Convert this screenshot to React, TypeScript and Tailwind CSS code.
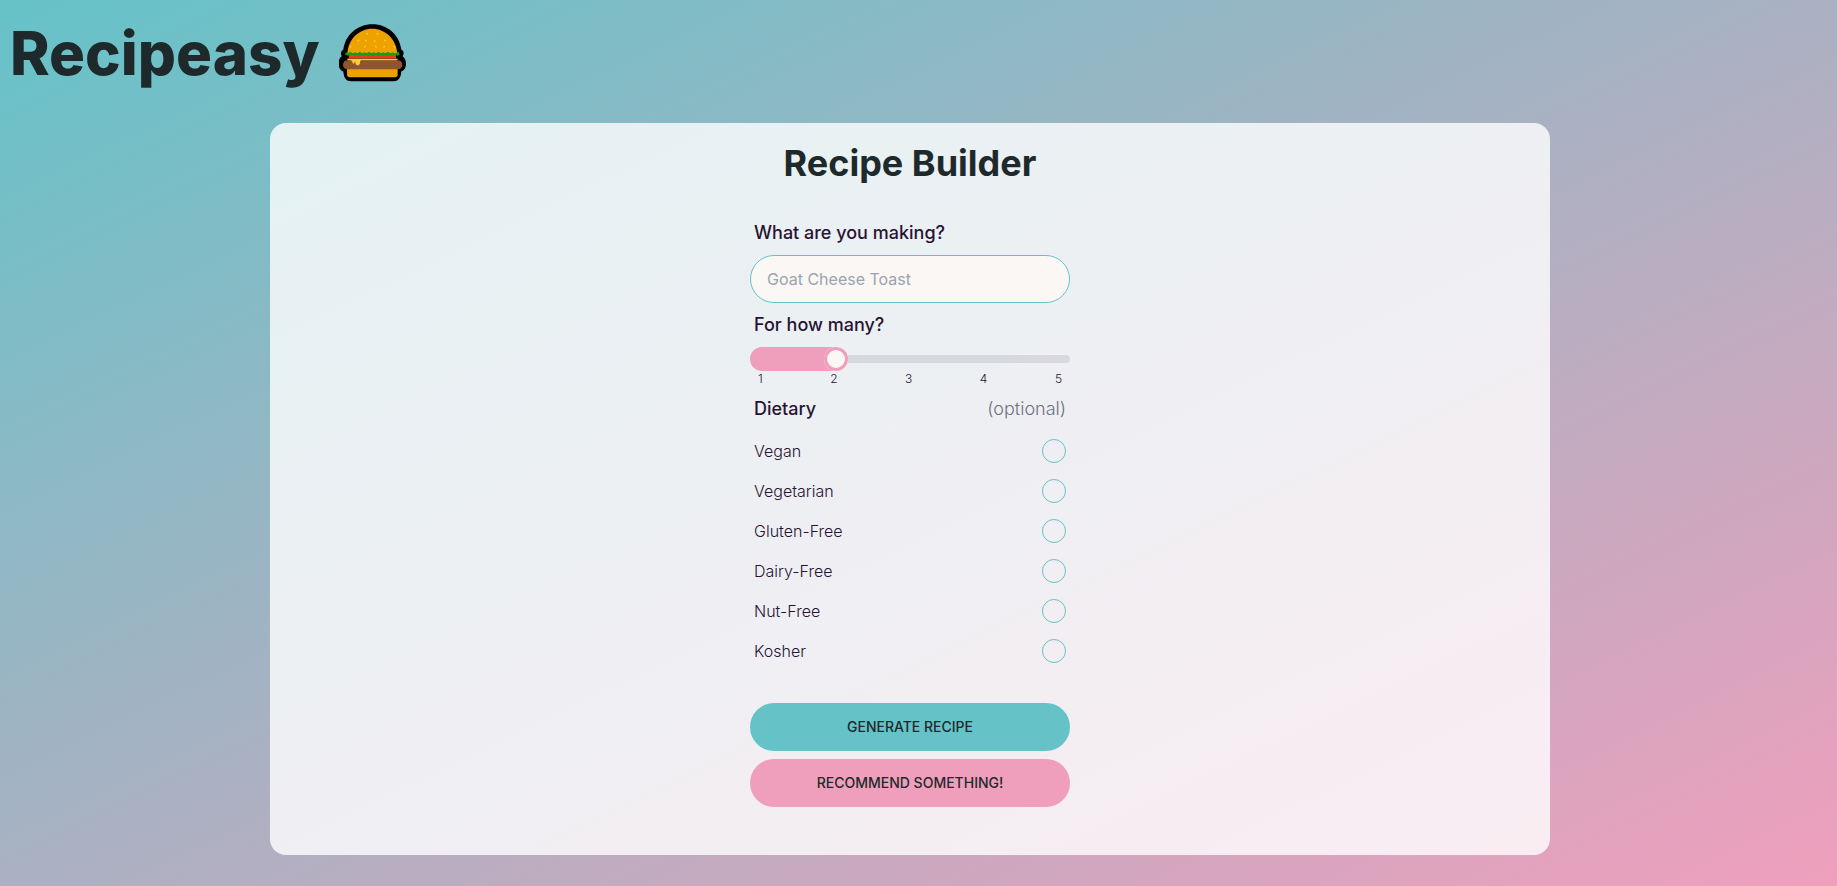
import { useState } from "react";

const DIETS = ["Vegan", "Vegetarian", "Gluten-Free", "Dairy-Free", "Nut-Free", "Kosher"];
const SERVINGS = [1, 2, 3, 4, 5];

function Burger() {
  return (
    <svg viewBox="57 43 200 171" className="h-[58px] w-[67px]" role="img" aria-label="Hamburger">
      <path
        d="M157 43C111 43 76 75 70 118C63 122 61 130 65 138C58 143 56 151 56 162C56 173 62 181 70 184C71 204 79 213 93 213H219C234 213 242 204 243 184C251 181 257 173 257 162C257 151 254 143 247 138C252 130 251 122 243 118C237 75 203 43 157 43Z"
        fill="#000"
      />
      <path d="M82 130C84 88 116 56 156 56S228 88 231 130Z" fill="#eda200" />
      <path d="M81 176H232V193C232 198 229 201 224 201H89C84 201 81 198 81 193Z" fill="#eda200" />
      <rect x="86" y="132" width="141" height="13" fill="#f03a17" />
      <path d="M80 146H234L228 152H86Z" fill="#ffc83d" />
      <rect x="69" y="150" width="177" height="27" rx="13" fill="#8e562e" />
      <path
        d="M91 149H124L120 153V158C118 168 106 166 106 158V154H104V156C104 161 97 161 97 156V154Z"
        fill="#ffc83d"
      />
      <path
        d="M77 126L84 129L91 125L98 129L105 126L112 129L119 125L126 129L133 126L140 129L147 125L154 129L161 126L168 129L175 125L182 129L189 126L196 129L203 125L210 129L217 126L224 129L235 125L238 134L231 137L224 133L217 138L210 134L203 138L196 134L188 139L181 134L174 138L167 134L160 138L153 134L146 138L139 134L132 139L125 134L118 139L110 134L103 138L96 134L89 137L75 134Z"
        fill="#13a10e"
      />
      <g stroke="#ffc83d" strokeWidth="4" strokeLinecap="round">
        <path d="M140 70l2 2M173 70l-2 2M116 90l-2 2M136 90l2 2M164 92l-2 2M193 90l2 2M92 109l-2 2M135 109l-2 2M166 109l2 2M193 109l-2 2M221 109l2 2" />
      </g>
    </svg>
  );
}

export default function App() {
  const [servings, setServings] = useState(2);

  return (
    <div className="min-h-screen bg-linear-to-br/srgb from-[#65c3c8] to-[#ef9fbc] pr-[17px] font-['Inter',sans-serif] font-light text-[#291334]">
      <header className="flex h-[106px] items-center gap-[19px] px-2.5">
        <h1 className="text-6xl font-extrabold text-[#1e292b]">Recipeasy</h1>
        <Burger />
      </header>

      <main className="mx-auto mt-[17px] flex max-w-7xl flex-col items-center rounded-2xl bg-white/80 pt-5 pb-12">
        <h2 className="mb-7 text-4xl font-bold text-[#1e292b]">Recipe Builder</h2>

        <form className="flex w-80 flex-col" onSubmit={(e) => e.preventDefault()}>
          <label htmlFor="dish" className="px-1 py-2 text-lg font-medium">
            What are you making?
          </label>
          <input
            id="dish"
            type="text"
            placeholder="Goat Cheese Toast"
            className="h-12 rounded-full border border-[#65c3c8] bg-[#faf7f5] px-4 font-normal placeholder:text-[#9ca3af]"
          />

          <label htmlFor="servings" className="px-1 py-2 text-lg font-medium">
            For how many?
          </label>
          <input
            id="servings"
            type="range"
            min={1}
            max={5}
            value={servings}
            onChange={(e) => setServings(Number(e.target.value))}
            className="h-6 w-full cursor-pointer appearance-none overflow-hidden rounded-full bg-transparent [&::-webkit-slider-runnable-track]:h-2 [&::-webkit-slider-runnable-track]:rounded-full [&::-webkit-slider-runnable-track]:bg-[#291334]/10 [&::-webkit-slider-thumb]:-mt-2 [&::-webkit-slider-thumb]:size-6 [&::-webkit-slider-thumb]:appearance-none [&::-webkit-slider-thumb]:rounded-full [&::-webkit-slider-thumb]:bg-[#faf7f5] [&::-webkit-slider-thumb]:shadow-[inset_0_0_0_3px_#ef9fbc,-1610px_0_0_1600px_#ef9fbc]"
          />
          <div className="flex justify-between px-2 text-xs">
            {SERVINGS.map((n) => (
              <span key={n}>{n}</span>
            ))}
          </div>

          <fieldset>
            <legend className="flex w-full justify-between px-1 py-2 text-lg">
              <span className="font-medium">Dietary</span>
              <span className="text-[#6b7280]">(optional)</span>
            </legend>
            {DIETS.map((diet) => (
              <label key={diet} className="flex cursor-pointer items-center justify-between px-1 py-2">
                <span>{diet}</span>
                <input
                  type="checkbox"
                  className="size-6 cursor-pointer appearance-none rounded-full border border-[#65c3c8] checked:bg-[#65c3c8]"
                />
              </label>
            ))}
          </fieldset>

          <div className="mt-8 flex flex-col gap-2 text-sm font-medium text-[#1e292b]">
            <button type="submit" className="h-12 cursor-pointer rounded-full bg-[#65c3c8] uppercase">
              Generate Recipe
            </button>
            <button type="button" className="h-12 cursor-pointer rounded-full bg-[#ef9fbc] uppercase">
              Recommend Something!
            </button>
          </div>
        </form>
      </main>
    </div>
  );
}
